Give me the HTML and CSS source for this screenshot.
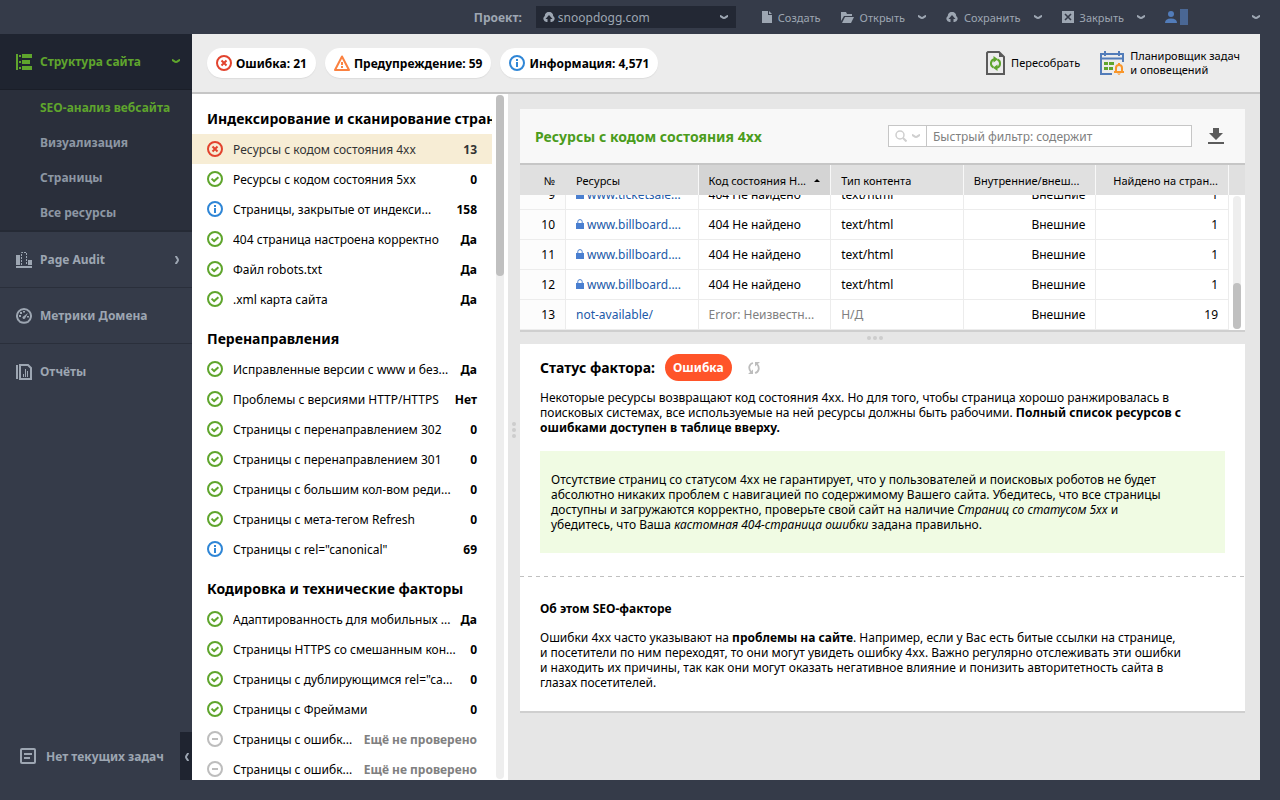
FILE: index.html
```html
<!DOCTYPE html>
<html lang="ru">
<head>
  <meta charset="UTF-8" />
  <meta name="viewport" content="width=device-width, initial-scale=1" />
  <title>snoopdogg.com - SEO-анализ вебсайта</title>
  <link rel="stylesheet" href="styles.css">
</head>
<body>

  <!-- icons -->
  <svg class="sprite" width="0" height="0" aria-hidden="true">
    <symbol id="i-ok" viewBox="0 0 16 16"><circle cx="8" cy="8" r="7" fill="none" stroke="#5fa52d" stroke-width="2"/><path d="M4.600 7.600l2.500 2.500 4.300-3.900" fill="none" stroke="#5fa52d" stroke-width="2"/></symbol>
    <symbol id="i-error" viewBox="0 0 16 16"><circle cx="8" cy="8" r="7" fill="none" stroke="#e2432e" stroke-width="2"/><path d="M5.500 5.500l5 5M10.500 5.500l-5 5" stroke="#e2432e" stroke-width="2"/></symbol>
    <symbol id="i-info" viewBox="0 0 16 16"><circle cx="8" cy="8" r="7" fill="none" stroke="#2f86d6" stroke-width="2"/><path d="M7 4h2v2H7zM7 7h2v5H7z" fill="#2f86d6"/></symbol>
    <symbol id="i-none" viewBox="0 0 16 16"><circle cx="8" cy="8" r="7" fill="none" stroke="#bdbdbd" stroke-width="2"/><path d="M5 8h6" stroke="#bdbdbd" stroke-width="2"/></symbol>
    <symbol id="i-warning" viewBox="0 0 16 16"><path d="M8 1.500L15 15H1z" fill="none" stroke="#fb8140" stroke-width="2" stroke-linejoin="round"/><path d="M7 7h2v3H7zM7 11h2v2H7z" fill="#fb8140"/></symbol>
    <symbol id="i-down" viewBox="0 0 8 5"><path d="M0 1c1.200 0 2.500 2 4 2s2.800-2 4-2" fill="none" stroke="currentColor" stroke-width="2"/></symbol>
    <symbol id="i-cloud" viewBox="0 0 12 10"><path d="M3.500 10A3.300 3.300 0 0 1 1.800 4 4.200 4.200 0 0 1 10.200 4 3.300 3.300 0 0 1 8.500 10H7.500V7H9.500L6 3 2.500 7H4.500V10z" fill="currentColor"/></symbol>
    <symbol id="i-lock" viewBox="0 0 8 10"><path d="M0 4h8v6H0z" fill="#4a7fd0"/><path d="M1.800 4V2.600a2.200 2 0 0 1 4.400 0V4" fill="none" stroke="#4a7fd0"/></symbol>
  </svg>

  <header class="topbar">
    <label class="project-label" for="project">Проект:</label>
    <div class="project">
      <svg class="project-cloud" width="12" height="10"><use href="#i-cloud"/></svg>
      <select id="project">
        <option>snoopdogg.com</option>
      </select>
      <svg class="project-down" width="8" height="5"><use href="#i-down"/></svg>
    </div>
    <div class="actions">
      <button class="action">
        <svg width="10" height="12" viewBox="0 0 10 12"><path d="M0 0h6v4h4v8H0z" fill="currentColor"/><path d="M7 0l3 3H7z" fill="currentColor"/></svg>
        Создать
      </button>
      <button class="action">
        <svg width="13" height="11" viewBox="0 0 13 11"><path d="M0 0h5l1 2h5v2H3L0 9z" fill="currentColor"/><path d="M4 5h9l-3 6H1z" fill="currentColor"/></svg>
        Открыть
        <svg class="action-down" width="8" height="5"><use href="#i-down"/></svg>
      </button>
      <button class="action">
        <svg width="12" height="10"><use href="#i-cloud"/></svg>
        Сохранить
        <svg class="action-down" width="8" height="5"><use href="#i-down"/></svg>
      </button>
      <button class="action">
        <svg width="12" height="12" viewBox="0 0 12 12"><path d="M0 0h12v12H0z" fill="currentColor"/><path d="M3 3l6 6M9 3L3 9" stroke="#353b49" stroke-width="1.600"/></svg>
        Закрыть
        <svg class="action-down" width="8" height="5"><use href="#i-down"/></svg>
      </button>
      <button class="action user" aria-label="Профиль">
        <svg width="12" height="12" viewBox="0 0 12 12"><circle cx="6" cy="3" r="3" fill="#527cb9"/><path d="M0 12c0-3 2-4.500 6-4.500s6 1.500 6 4.500z" fill="#527cb9"/></svg>
        <span class="user-name"></span>
        <svg class="action-down" width="8" height="5"><use href="#i-down"/></svg>
      </button>
    </div>
  </header>

  <div class="app">
    <aside class="sidebar">
      <nav>
        <a class="menu-item active" href="#structure">
          <svg width="16" height="16" viewBox="0 0 16 16" fill="currentColor"><path d="M0 0h2v16H0zM6 0h10v4H6zM6 6h8v4H6zM6 12h10v4H6zM3 1h2v2H3zM3 7h2v2H3zM3 13h2v2H3z"/></svg>
          Структура сайта
          <svg class="menu-arrow" width="8" height="5"><use href="#i-down"/></svg>
        </a>
        <div class="submenu">
          <a class="current" href="#seo">SEO-анализ вебсайта</a>
          <a href="#visual">Визуализация</a>
          <a href="#pages">Страницы</a>
          <a href="#resources">Все ресурсы</a>
        </div>
        <a class="menu-item" href="#audit">
          <svg width="16" height="16" viewBox="0 0 16 16" fill="currentColor"><path d="M0 3h4v10H0zM12 8h4v5h-4zM0 14h16v2H0z"/><path d="M5.500 13V.5h5V13" fill="none" stroke="currentColor" stroke-dasharray="2 1"/></svg>
          Page Audit
          <svg class="menu-arrow" width="5" height="8" viewBox="0 0 5 8"><path d="M1 0c0 1.200 2 2.500 2 4s-2 2.800-2 4" fill="none" stroke="currentColor" stroke-width="2"/></svg>
        </a>
        <a class="menu-item" href="#metrics">
          <svg width="16" height="16" viewBox="0 0 16 16"><path d="M4 13.800A7 7 0 1 1 12 13.800Q8 15.500 4 13.800z" fill="none" stroke="currentColor" stroke-width="2"/><path d="M6.500 9L12 5 9 10.500a1.500 1.500 0 0 1-2.500-1.500zM3 7h2v2H3zM4 4h2v2H4zM7 3h2v1.500H7zM11 8h2v1.500h-2z" fill="currentColor"/></svg>
          Метрики Домена
        </a>
        <a class="menu-item" href="#reports">
          <svg width="16" height="16" viewBox="0 0 16 16" fill="currentColor"><path d="M0 1h2v14H0z"/><path d="M4 1h8l3 3v11H4z" fill="none" stroke="currentColor" stroke-width="2"/><path d="M7 10h1v3H7zM9 5h1v8H9zM11 7h1v6h-1z"/></svg>
          Отчёты
        </a>
      </nav>
      <div class="tasks">
        <svg width="16" height="16" viewBox="0 0 16 16"><rect x="1" y="1" width="14" height="14" rx="1" fill="none" stroke="currentColor" stroke-width="2"/><path d="M4 6h8M4 10h6" stroke="currentColor" stroke-width="2"/></svg>
        <span>Нет текущих задач</span>
        <button class="collapse" aria-label="Свернуть меню">
          <svg width="5" height="8" viewBox="0 0 5 8"><path d="M4 0C4 1.200 2 2.500 2 4s2 2.800 2 4" fill="none" stroke="currentColor" stroke-width="2"/></svg>
        </button>
      </div>
    </aside>

    <main class="content">
      <div class="summary">
        <div class="pill"><svg width="16" height="16"><use href="#i-error"/></svg>Ошибка: 21</div>
        <div class="pill"><svg width="16" height="16"><use href="#i-warning"/></svg>Предупреждение: 59</div>
        <div class="pill"><svg width="16" height="16"><use href="#i-info"/></svg>Информация: 4,571</div>
        <div class="tools">
          <button class="tool">
            <svg width="19" height="24" viewBox="0 0 19 24"><path d="M2 1h11l5 5v17H1V2z" fill="none" stroke="#5b5b5b" stroke-width="2"/><path d="M13 1v5h5z" fill="#5b5b5b"/><path d="M7.500 16.500A4.500 4.500 0 0 1 8 8.200M11.500 8.500a4.500 4.500 0 0 1-.5 8.300" fill="none" stroke="#5fa52d" stroke-width="2"/><path d="M7.500 5l4.500 3.300L7.500 11.500zM11.500 13.500L7 16.700l4.500 3.300z" fill="#5fa52d"/></svg>
            Пересобрать
          </button>
          <button class="tool">
            <svg width="24" height="24" viewBox="0 0 24 24"><path d="M12 23H1V3h22v8M1 7.500h22M5 0v5M19 0v5" fill="none" stroke="#527cb9" stroke-width="2"/><path d="M4 11h4v3H4zM9 11h5v3H9zM4 16h4v3H4zM9 16h4v3H9z" fill="#5fa52d"/><path d="M14 21h10M16 20v-3a3 3 0 0 1 6 0v3M19 12v2" fill="none" stroke="#f9962a" stroke-width="2"/><path d="M17 22.500h4L19 24z" fill="#f9962a"/></svg>
            <span>Планировщик задач<br>и оповещений</span>
          </button>
        </div>
      </div>

      <div class="workspace">
        <section class="factors">
          <div class="factor-list">
            <h2>Индексирование и сканирование страниц</h2>
            <ul>
              <li class="selected"><svg width="16" height="16"><use href="#i-error"/></svg><span>Ресурсы с кодом состояния 4xx</span><b>13</b></li>
              <li><svg width="16" height="16"><use href="#i-ok"/></svg><span>Ресурсы с кодом состояния 5xx</span><b>0</b></li>
              <li><svg width="16" height="16"><use href="#i-info"/></svg><span>Страницы, закрытые от индекси...</span><b>158</b></li>
              <li><svg width="16" height="16"><use href="#i-ok"/></svg><span>404 страница настроена корректно</span><b>Да</b></li>
              <li><svg width="16" height="16"><use href="#i-ok"/></svg><span>Файл robots.txt</span><b>Да</b></li>
              <li><svg width="16" height="16"><use href="#i-ok"/></svg><span>.xml карта сайта</span><b>Да</b></li>
            </ul>
            <h2>Перенаправления</h2>
            <ul>
              <li><svg width="16" height="16"><use href="#i-ok"/></svg><span>Исправленные версии с www и без...</span><b>Да</b></li>
              <li><svg width="16" height="16"><use href="#i-ok"/></svg><span>Проблемы с версиями HTTP/HTTPS</span><b>Нет</b></li>
              <li><svg width="16" height="16"><use href="#i-ok"/></svg><span>Страницы с перенаправлением 302</span><b>0</b></li>
              <li><svg width="16" height="16"><use href="#i-ok"/></svg><span>Страницы с перенаправлением 301</span><b>0</b></li>
              <li><svg width="16" height="16"><use href="#i-ok"/></svg><span>Страницы с большим кол-вом реди...</span><b>0</b></li>
              <li><svg width="16" height="16"><use href="#i-ok"/></svg><span>Страницы с мета-тегом Refresh</span><b>0</b></li>
              <li><svg width="16" height="16"><use href="#i-info"/></svg><span>Страницы с rel="canonical"</span><b>69</b></li>
            </ul>
            <h2>Кодировка и технические факторы</h2>
            <ul>
              <li><svg width="16" height="16"><use href="#i-ok"/></svg><span>Адаптированность для мобильных ...</span><b>Да</b></li>
              <li><svg width="16" height="16"><use href="#i-ok"/></svg><span>Страницы HTTPS со смешанным кон...</span><b>0</b></li>
              <li><svg width="16" height="16"><use href="#i-ok"/></svg><span>Страницы с дублирующимся rel="ca...</span><b>0</b></li>
              <li><svg width="16" height="16"><use href="#i-ok"/></svg><span>Страницы с Фреймами</span><b>0</b></li>
              <li class="unchecked"><svg width="16" height="16"><use href="#i-none"/></svg><span>Страницы с ошибк...</span><b>Ещё не проверено</b></li>
              <li class="unchecked"><svg width="16" height="16"><use href="#i-none"/></svg><span>Страницы с ошибк...</span><b>Ещё не проверено</b></li>
            </ul>
          </div>
          <div class="track"><div class="thumb"></div></div>
        </section>

        <div class="splitter-v"><i></i><i></i><i></i></div>

        <div class="details">
          <section class="panel">
            <div class="panel-head">
              <h1>Ресурсы с кодом состояния 4xx</h1>
              <div class="filter">
                <button class="filter-mode" aria-label="Режим фильтра">
                  <svg width="12" height="12" viewBox="0 0 12 12"><circle cx="5" cy="5" r="4" fill="none" stroke="currentColor" stroke-width="1.500"/><path d="M8 8l3.500 3.500" stroke="currentColor" stroke-width="2"/></svg>
                  <svg width="8" height="5"><use href="#i-down"/></svg>
                </button>
                <input type="text" aria-label="Быстрый фильтр" placeholder="Быстрый фильтр: содержит">
              </div>
              <button class="download" aria-label="Скачать">
                <svg width="16" height="16" viewBox="0 0 16 16"><path d="M5 0h6v5h4l-7 7-7-7h4zM0 14h16v2H0z" fill="#5b5b5b"/></svg>
              </button>
            </div>
            <div class="table-wrap">
              <div class="table-scroll" id="resources-table">
                <table>
                  <thead>
                    <tr>
                      <th class="num">№</th>
                      <th>Ресурсы</th>
                      <th class="sorted"><div class="th-sort"><span>Код состояния Н...</span><svg width="6" height="3" viewBox="0 0 6 3"><path d="M0 3l3-3 3 3z"/></svg></div></th>
                      <th>Тип контента</th>
                      <th>Внутренние/внеш...</th>
                      <th class="right">Найдено на стран...</th>
                      <th class="gutter"></th>
                    </tr>
                  </thead>
                  <tbody>
                    <tr><td class="num">9</td><td><a href="#r9"><svg width="8" height="10"><use href="#i-lock"/></svg>www.ticketsale...</a></td><td>404 Не найдено</td><td>text/html</td><td class="right">Внешние</td><td class="right">1</td><td class="gutter"></td></tr>
                    <tr><td class="num">10</td><td><a href="#r10"><svg width="8" height="10"><use href="#i-lock"/></svg>www.billboard....</a></td><td>404 Не найдено</td><td>text/html</td><td class="right">Внешние</td><td class="right">1</td><td class="gutter"></td></tr>
                    <tr><td class="num">11</td><td><a href="#r11"><svg width="8" height="10"><use href="#i-lock"/></svg>www.billboard....</a></td><td>404 Не найдено</td><td>text/html</td><td class="right">Внешние</td><td class="right">1</td><td class="gutter"></td></tr>
                    <tr><td class="num">12</td><td><a href="#r12"><svg width="8" height="10"><use href="#i-lock"/></svg>www.billboard....</a></td><td>404 Не найдено</td><td>text/html</td><td class="right">Внешние</td><td class="right">1</td><td class="gutter"></td></tr>
                    <tr><td class="num">13</td><td><a href="#r13">not-available/</a></td><td class="muted">Error: Неизвестн...</td><td class="muted">Н/Д</td><td class="right">Внешние</td><td class="right">19</td><td class="gutter"></td></tr>
                  </tbody>
                </table>
              </div>
              <div class="track table-track"><div class="thumb"></div></div>
            </div>
          </section>

          <div class="splitter-h"><i></i><i></i><i></i></div>

          <section class="panel info">
            <div class="status">
              <h2>Статус фактора:</h2>
              <span class="badge">Ошибка</span>
              <button class="refresh" aria-label="Обновить">
                <svg width="12" height="12" viewBox="0 0 12 12"><path d="M5 1C1 2 0 6.500 3 10M7 11c4-1 5-5.500 2-9" fill="none" stroke="currentColor" stroke-width="1.800"/><path d="M0 12h5V7.500zM12 0H7v4.500z" fill="currentColor"/></svg>
              </button>
            </div>
            <p>Некоторые ресурсы возвращают код состояния 4xx. Но для того, чтобы страница хорошо ранжировалась в поисковых системах, все используемые на ней ресурсы должны быть рабочими. <b>Полный список ресурсов с ошибками доступен в таблице вверху.</b></p>
            <div class="note">Отсутствие страниц со статусом 4xx не гарантирует, что у пользователей и поисковых роботов не будет абсолютно никаких проблем с навигацией по содержимому Вашего сайта. Убедитесь, что все страницы доступны и загружаются корректно, проверьте свой сайт на наличие <i>Страниц со статусом 5xx</i> и<br>убедитесь, что Ваша <i>кастомная 404-страница ошибки</i> задана правильно.</div>
            <div class="about">
              <h3>Об этом SEO-факторе</h3>
              <p>Ошибки 4xx часто указывают на <b>проблемы на сайте</b>. Например, если у Вас есть битые ссылки на странице,<br>и посетители по ним переходят, то они могут увидеть ошибку 4xx. Важно регулярно отслеживать эти ошибки<br>и находить их причины, так как они могут оказать негативное влияние и понизить авторитетность сайта в<br>глазах посетителей.</p>
            </div>
          </section>
        </div>
      </div>
    </main>
  </div>

  <script>
    // open the table on its last rows
    const table = document.getElementById("resources-table");
    table.scrollTop = table.scrollHeight;
  </script>
</body>
</html>
```
FILE: styles.css
```css
:root {
  --frame: #353b49;
  --frame-text: #9da6b2;
  --green: #5fa52d;
  --page-bg: #e6e6e6;
  --line: #c6c6c6;
}

* {
  box-sizing: border-box;
}

body {
  margin: 0;
  height: 100vh;
  display: flex;
  flex-direction: column;
  background-color: var(--frame);
  color: #000;
  font-family: "Noto Sans", "Open Sans", sans-serif;
  font-size: 12px;
  line-height: 15px;
}

svg {
  flex: none;
}

.sprite {
  position: absolute;
}

button {
  border: none;
  background: none;
  padding: 0;
  color: inherit;
  font: inherit;
  cursor: pointer;
}

h1, h2, h3, p, ul {
  margin: 0;
  padding: 0;
}

a {
  text-decoration: none;
}

/* top bar */
.topbar {
  flex: none;
  height: 34px;
  padding-right: 20px;
  display: flex;
  justify-content: flex-end;
  align-items: center;
  color: var(--frame-text);
}

.project-label {
  font-weight: bold;
  margin-right: 14px;
}

.project {
  position: relative;
  width: 200px;
  margin-right: 26px;
}

.project select {
  appearance: none;
  width: 100%;
  height: 22px;
  padding: 0 22px;
  border: none;
  background-color: #232834;
  color: var(--frame-text);
  font: inherit;
}

.project-cloud,
.project-down {
  position: absolute;
  pointer-events: none;
}

.project-cloud {
  left: 7px;
  top: 6px;
}

.project-down {
  right: 8px;
  top: 9px;
}

.actions {
  display: flex;
  gap: 20px;
}

.action {
  display: flex;
  align-items: center;
  gap: 6px;
  font-size: 11px;
}

.action-down {
  margin-left: 7px;
}

.user {
  width: 95px;
  gap: 3px;
}

.user-name {
  width: 8px;
  height: 16px;
  background-color: #4a6794;
}

.user .action-down {
  margin-left: auto;
}

/* frame */
.app {
  flex: 1;
  min-height: 0;
  display: flex;
  padding: 0 20px 20px 0;
}

.sidebar {
  flex: none;
  width: 192px;
  display: flex;
  flex-direction: column;
  justify-content: space-between;
  color: var(--frame-text);
  font-weight: bold;
}

.menu-item {
  height: 56px;
  padding: 0 12px 0 16px;
  display: flex;
  align-items: center;
  gap: 8px;
  color: var(--frame-text);
  border-bottom: 1px solid #2a2f3b;
}

.menu-item:last-child {
  border-bottom-color: transparent;
}

.menu-item.active {
  background-color: #1f2430;
  border-bottom-color: #1a1e28;
  color: var(--green);
}

.menu-arrow {
  margin-left: auto;
}

.submenu {
  background-color: #2a2f3b;
  border-bottom: 2px solid #252a35;
}

.submenu a {
  display: block;
  padding-left: 40px;
  line-height: 35px;
  color: #8d97a4;
}

.submenu .current {
  color: var(--green);
}

.tasks {
  height: 48px;
  display: flex;
  align-items: center;
  gap: 10px;
  padding-left: 20px;
  white-space: nowrap;
}

.collapse {
  margin-left: auto;
  width: 12px;
  height: 48px;
  background-color: #1f2430;
}

/* summary */
.content {
  flex: 1;
  min-width: 0;
  display: flex;
  flex-direction: column;
  background-color: var(--page-bg);
}

.summary {
  flex: none;
  height: 60px;
  padding: 0 20px 0 15px;
  display: flex;
  align-items: center;
  gap: 9px;
  background-color: #ececec;
  border-bottom: 2px solid var(--line);
}

.pill {
  height: 30px;
  padding: 0 9px;
  display: flex;
  align-items: center;
  gap: 4px;
  border-radius: 15px;
  background-color: #fff;
  box-shadow: 0 1px 1px #ddd;
  font-weight: bold;
}

.tools {
  margin-left: auto;
  display: flex;
  gap: 20px;
}

.tool {
  display: flex;
  align-items: center;
  gap: 6px;
  font-size: 11px;
  line-height: 14px;
  text-align: left;
}

.workspace {
  flex: 1;
  min-height: 0;
  display: flex;
}

/* factor list */
.factors {
  flex: none;
  width: 316px;
  display: flex;
  gap: 4px;
  padding-right: 4px;
  background-color: #fff;
}

.factor-list {
  flex: 1;
  min-width: 0;
  overflow: hidden;
  padding-top: 10px;
}

.factor-list h2 {
  padding-left: 15px;
  font-size: 14px;
  line-height: 30px;
  white-space: nowrap;
}

.factor-list ul {
  list-style: none;
  margin-bottom: 10px;
}

.factor-list li {
  height: 30px;
  padding: 0 15px;
  display: flex;
  align-items: center;
}

.factor-list li span {
  flex: 1;
  margin-left: 10px;
  overflow: hidden;
  text-overflow: ellipsis;
  white-space: nowrap;
}

.factor-list .selected {
  background-color: #f7edd5;
  color: #333;
}

.factor-list .unchecked b {
  color: #808080;
}

.track {
  width: 8px;
  margin: 1px 0;
  border-radius: 4px;
  background-color: #eee;
}

.thumb {
  height: 181px;
  border-radius: 4px;
  background-color: #c0c0c0;
}

/* splitters */
.splitter-v,
.splitter-h {
  flex: none;
  display: flex;
  align-items: center;
  justify-content: center;
  gap: 2px;
}

.splitter-v {
  width: 12px;
  padding-bottom: 14px;
  flex-direction: column;
}

.splitter-h {
  height: 12px;
  padding-right: 15px;
}

.splitter-v i,
.splitter-h i {
  width: 4px;
  height: 4px;
  border-radius: 50%;
  background-color: #cdcdcd;
}

/* details */
.details {
  flex: 1;
  min-width: 0;
  padding: 15px 15px 0 0;
}

.panel {
  background-color: #fff;
  border-bottom: 2px solid #cfcfcf;
}

.panel-head {
  height: 56px;
  padding: 0 21px 0 15px;
  display: flex;
  align-items: center;
  background-color: #f8f8f8;
  border-bottom: 2px solid var(--line);
}

.panel-head h1 {
  font-size: 14px;
  color: #4b9c1c;
}

.filter {
  width: 304px;
  height: 22px;
  margin: 0 16px 0 auto;
  display: flex;
  border: 1px solid var(--line);
  background-color: #fff;
}

.filter-mode {
  width: 38px;
  display: flex;
  align-items: center;
  justify-content: center;
  gap: 5px;
  border-right: 1px solid var(--line);
  color: #cfcfcf;
}

.filter input {
  flex: 1;
  min-width: 0;
  padding: 0 6px;
  border: none;
  background: none;
  font: inherit;
}

.filter input::placeholder {
  color: #808080;
}

.download {
  display: flex;
}

/* table */
.table-wrap {
  position: relative;
}

.table-scroll {
  height: 165px;
  overflow: auto;
  scrollbar-width: none;
}

table {
  width: 100%;
  table-layout: fixed;
  border-collapse: separate;
  border-spacing: 0;
}

th, td {
  height: 30px;
  padding: 0 10px;
  overflow: hidden;
  text-overflow: ellipsis;
  white-space: nowrap;
  text-align: left;
}

th {
  position: sticky;
  top: 0;
  background-color: #e0e0e0;
  border-right: 1px solid #f8f8f8;
  font-size: 11px;
  font-weight: normal;
}

td {
  border-right: 1px solid #ececec;
  border-bottom: 1px solid #ececec;
}

.num {
  width: 46px;
  text-align: right;
}

th.num {
  border-right-color: #e0e0e0;
}

td.num {
  background-color: #fcfcfc;
}

.right {
  text-align: right;
}

.sorted {
  background-color: #d4d4d4;
}

.th-sort {
  display: flex;
  align-items: center;
  justify-content: space-between;
}

th.gutter,
td.gutter {
  width: 16px;
  padding: 0;
  border: none;
}

td a {
  color: #2159a8;
}

td svg {
  margin-right: 3px;
}

.muted {
  color: #808080;
}

.table-track {
  position: absolute;
  top: 30px;
  right: 4px;
  bottom: 0;
  display: flex;
  align-items: flex-end;
}

.table-track .thumb {
  width: 8px;
  height: 46px;
}

/* factor info */
.info {
  padding: 10px 20px 21px;
}

.status {
  display: flex;
  align-items: center;
  margin-bottom: 9px;
}

.status h2 {
  font-size: 14px;
}

.badge {
  margin: 0 16px 0 10px;
  padding: 0 8px;
  border-radius: 14px;
  background-color: #ff5429;
  color: #fff;
  font-weight: bold;
  line-height: 27px;
}

.refresh {
  display: flex;
  color: #bdbdbd;
}

.note {
  margin-top: 16px;
  padding: 21px 11px;
  background-color: #f0fbe3;
}

.about {
  margin: 23px -20px 0;
  padding: 25px 20px 0;
  background: repeating-linear-gradient(to right, #c0c0c0 0 4px, #fff 4px 8px) top / 100% 1px no-repeat;
}

.about h3 {
  margin-bottom: 14px;
  font-size: 12px;
}
```
